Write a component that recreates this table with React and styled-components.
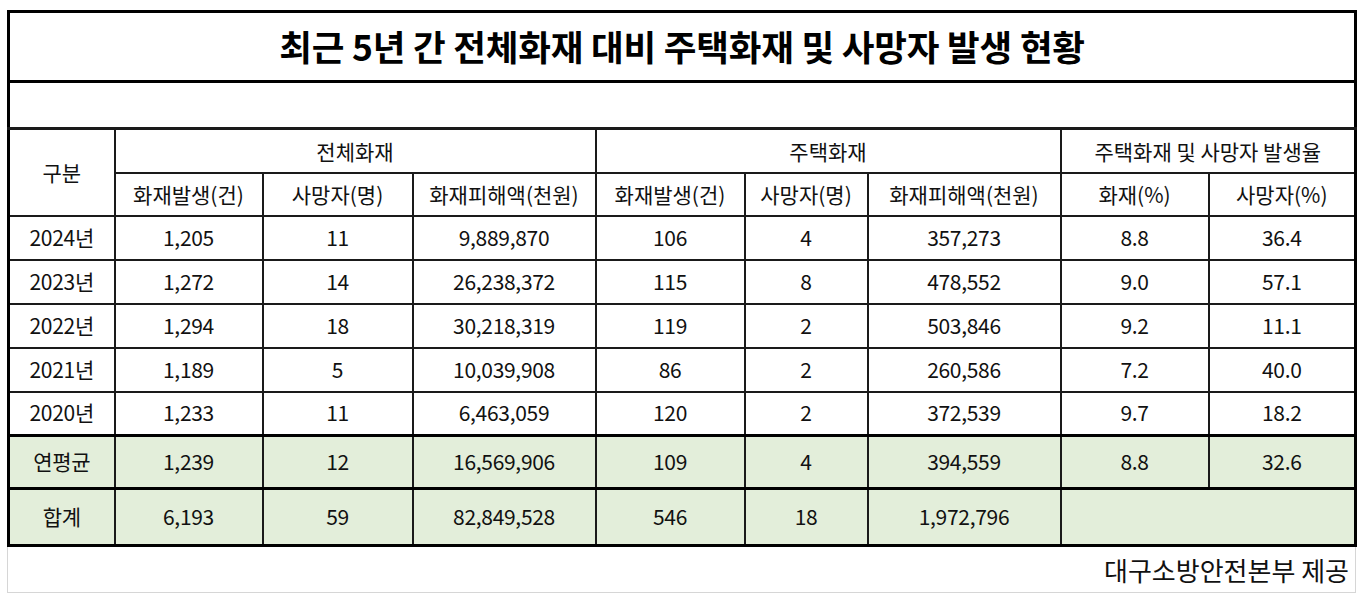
import React from 'react';
import styled, { createGlobalStyle, css } from 'styled-components';

const GlobalStyle = createGlobalStyle`
  html, body {
    margin: 0;
    padding: 0;
    background: #fff;
  }
  body {
    font-family: "Noto Sans CJK KR", "Noto Sans", sans-serif;
    color: #111;
  }
`;

const Sheet = styled.div`
  width: 1349px;
  padding: 10px 0 0 7px;
`;

const Table = styled.table`
  width: 1349px;
  table-layout: fixed;
  border-collapse: collapse;
  border: 3px solid #000;
`;

const Row = styled.tr`
  height: ${(p) => p.$h || 44}px;
  ${(p) => p.$thickTop && css`
    & > td, & > th {
      border-top: 3px solid #000;
    }
  `}
`;

const TitleCell = styled.th`
  border-bottom: 3px solid #000;
  font-size: 35.5px;
  font-weight: 700;
  letter-spacing: -0.2px;
  text-align: center;
  padding: 0 0 2px 0;
  color: #000;
`;

const BlankCell = styled.td`
  border-bottom: 3px solid #1a1a1a;
`;

const HeadCell = styled.th`
  border: 2px solid #1a1a1a;
  font-size: 21px;
  font-weight: 400;
  text-align: center;
  padding: 0;
  white-space: nowrap;
  color: #111;
`;

const Cell = styled.td`
  border: 2px solid #1a1a1a;
  font-size: 21px;
  letter-spacing: -0.3px;
  text-align: center;
  padding: 0 0 2px 0;
  white-space: nowrap;
  background: ${(p) => (p.$green ? '#e3eeda' : '#fff')};
`;

const Footer = styled.div`
  height: 45px;
  border: 1px solid #d6d6d6;
  border-top: none;
  display: flex;
  align-items: center;
  justify-content: flex-end;
  padding-right: 6px;
  font-size: 26px;
  color: #111;
`;

const widths = [106, 148, 150, 183, 149, 123, 193, 148, 147];

const years = [
  ['2024년', '1,205', '11', '9,889,870', '106', '4', '357,273', '8.8', '36.4'],
  ['2023년', '1,272', '14', '26,238,372', '115', '8', '478,552', '9.0', '57.1'],
  ['2022년', '1,294', '18', '30,218,319', '119', '2', '503,846', '9.2', '11.1'],
  ['2021년', '1,189', '5', '10,039,908', '86', '2', '260,586', '7.2', '40.0'],
  ['2020년', '1,233', '11', '6,463,059', '120', '2', '372,539', '9.7', '18.2'],
];

const average = ['연평균', '1,239', '12', '16,569,906', '109', '4', '394,559', '8.8', '32.6'];
const total = ['합계', '6,193', '59', '82,849,528', '546', '18', '1,972,796'];

export default function App() {
  return (
    <>
      <GlobalStyle />
      <Sheet>
        <Table>
          <colgroup>
            {widths.map((w, i) => (
              <col key={i} style={{ width: w }} />
            ))}
          </colgroup>
          <tbody>
            <Row $h={70}>
              <TitleCell colSpan={9}>최근 5년 간 전체화재 대비 주택화재 및 사망자 발생 현황</TitleCell>
            </Row>
            <Row $h={47}>
              <BlankCell colSpan={9} />
            </Row>
            <Row $h={44}>
              <HeadCell rowSpan={2}>구분</HeadCell>
              <HeadCell colSpan={3}>전체화재</HeadCell>
              <HeadCell colSpan={3}>주택화재</HeadCell>
              <HeadCell colSpan={2}>주택화재 및 사망자 발생율</HeadCell>
            </Row>
            <Row $h={43}>
              <HeadCell>화재발생(건)</HeadCell>
              <HeadCell>사망자(명)</HeadCell>
              <HeadCell>화재피해액(천원)</HeadCell>
              <HeadCell>화재발생(건)</HeadCell>
              <HeadCell>사망자(명)</HeadCell>
              <HeadCell>화재피해액(천원)</HeadCell>
              <HeadCell>화재(%)</HeadCell>
              <HeadCell>사망자(%)</HeadCell>
            </Row>
            {years.map((r) => (
              <Row key={r[0]} $h={44}>
                {r.map((v, i) => (
                  <Cell key={i}>{v}</Cell>
                ))}
              </Row>
            ))}
            <Row $h={53} $thickTop>
              {average.map((v, i) => (
                <Cell key={i} $green>{v}</Cell>
              ))}
            </Row>
            <Row $h={57} $thickTop>
              {total.map((v, i) => (
                <Cell key={i} $green>{v}</Cell>
              ))}
              <Cell colSpan={2} $green />
            </Row>
          </tbody>
        </Table>
        <Footer>대구소방안전본부 제공</Footer>
      </Sheet>
    </>
  );
}
